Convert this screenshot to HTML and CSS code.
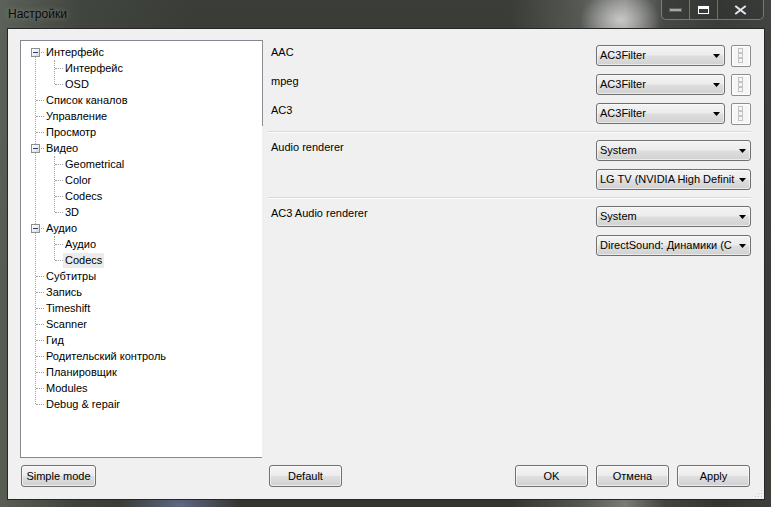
FILE: index.html
```html
<!DOCTYPE html>
<html lang="ru">
<head>
<meta charset="utf-8">
<title>Настройки</title>
<link rel="stylesheet" href="styles.css">
</head>
<body>
<div class="frame">
  <div class="titlebar">
    <span class="title">Настройки</span>
    <div class="caption">
      <span class="cap cap-min"><svg width="13" height="4" viewBox="0 0 13 4"><rect x="0.5" y="0.5" width="12" height="3" fill="#a3a8ab" stroke="#5d6166" stroke-width="1"/></svg></span>
      <span class="cap cap-max"><svg width="13" height="10" viewBox="0 0 13 10"><rect x="0.5" y="0.5" width="12" height="9" fill="none" stroke="#3a3d44" stroke-width="1"/><rect x="1.5" y="1.5" width="10" height="7" fill="none" stroke="#ffffff" stroke-width="1"/><rect x="2" y="2" width="9" height="2" fill="#ffffff"/><rect x="3.5" y="4.5" width="6" height="2" fill="#3a3d44"/></svg></span>
      <span class="cap cap-close"><svg width="13" height="10" viewBox="0 0 13 10"><path d="M2 1.5 L11 8.5 M11 1.5 L2 8.5" stroke="#3a3d44" stroke-width="3.6" stroke-linecap="square"/><path d="M2 1.5 L11 8.5 M11 1.5 L2 8.5" stroke="#e6e8ea" stroke-width="1.8" stroke-linecap="square"/></svg></span>
    </div>
  </div>
  <div class="client">
    <div class="main">
      <div class="tree">
        <div class="items">
          <div class="node top"><span class="box"></span><span class="lbl">Интерфейс</span></div>
          <div class="children">
            <div class="node child"><span class="lbl">Интерфейс</span></div>
            <div class="node child"><span class="lbl">OSD</span></div>
          </div>
          <div class="node top"><span class="lbl">Список каналов</span></div>
          <div class="node top"><span class="lbl">Управление</span></div>
          <div class="node top"><span class="lbl">Просмотр</span></div>
          <div class="node top"><span class="box"></span><span class="lbl">Видео</span></div>
          <div class="children">
            <div class="node child"><span class="lbl">Geometrical</span></div>
            <div class="node child"><span class="lbl">Color</span></div>
            <div class="node child"><span class="lbl">Codecs</span></div>
            <div class="node child"><span class="lbl">3D</span></div>
          </div>
          <div class="node top"><span class="box"></span><span class="lbl">Аудио</span></div>
          <div class="children">
            <div class="node child"><span class="lbl">Аудио</span></div>
            <div class="node child"><span class="lbl selected">Codecs</span></div>
          </div>
          <div class="node top"><span class="lbl">Субтитры</span></div>
          <div class="node top"><span class="lbl">Запись</span></div>
          <div class="node top"><span class="lbl">Timeshift</span></div>
          <div class="node top"><span class="lbl">Scanner</span></div>
          <div class="node top"><span class="lbl">Гид</span></div>
          <div class="node top"><span class="lbl">Родительский контроль</span></div>
          <div class="node top"><span class="lbl">Планировщик</span></div>
          <div class="node top"><span class="lbl">Modules</span></div>
          <div class="node top"><span class="lbl">Debug &amp; repair</span></div>
        </div>
      </div>
      <div class="panel">
        <div class="group">
          <div class="row">
            <span class="label">AAC</span>
            <div class="combo narrow"><span class="txt">AC3Filter</span><svg class="arrow" width="7" height="4" viewBox="0 0 7 4"><polygon points="0,0 7,0 3.5,4" fill="#000"/></svg></div>
            <span class="mini"><svg width="6" height="16" viewBox="0 0 6 16"><rect x="0.5" y="0.5" width="4" height="4" fill="none" stroke="#c4c4c4"/><rect x="0.5" y="5.5" width="4" height="4" fill="none" stroke="#c4c4c4"/><rect x="0.5" y="10.5" width="4" height="4" fill="none" stroke="#c4c4c4"/></svg></span>
          </div>
          <div class="row">
            <span class="label">mpeg</span>
            <div class="combo narrow"><span class="txt">AC3Filter</span><svg class="arrow" width="7" height="4" viewBox="0 0 7 4"><polygon points="0,0 7,0 3.5,4" fill="#000"/></svg></div>
            <span class="mini"><svg width="6" height="16" viewBox="0 0 6 16"><rect x="0.5" y="0.5" width="4" height="4" fill="none" stroke="#c4c4c4"/><rect x="0.5" y="5.5" width="4" height="4" fill="none" stroke="#c4c4c4"/><rect x="0.5" y="10.5" width="4" height="4" fill="none" stroke="#c4c4c4"/></svg></span>
          </div>
          <div class="row">
            <span class="label">AC3</span>
            <div class="combo narrow"><span class="txt">AC3Filter</span><svg class="arrow" width="7" height="4" viewBox="0 0 7 4"><polygon points="0,0 7,0 3.5,4" fill="#000"/></svg></div>
            <span class="mini"><svg width="6" height="16" viewBox="0 0 6 16"><rect x="0.5" y="0.5" width="4" height="4" fill="none" stroke="#c4c4c4"/><rect x="0.5" y="5.5" width="4" height="4" fill="none" stroke="#c4c4c4"/><rect x="0.5" y="10.5" width="4" height="4" fill="none" stroke="#c4c4c4"/></svg></span>
          </div>
        </div>
        <div class="sep"></div>
        <div class="group-row">
          <span class="label">Audio renderer</span>
          <div class="stack">
            <div class="combo wide"><span class="txt">System</span><svg class="arrow" width="7" height="4" viewBox="0 0 7 4"><polygon points="0,0 7,0 3.5,4" fill="#000"/></svg></div>
            <div class="combo wide"><span class="txt">LG TV (NVIDIA High Definit</span><svg class="arrow" width="7" height="4" viewBox="0 0 7 4"><polygon points="0,0 7,0 3.5,4" fill="#000"/></svg></div>
          </div>
        </div>
        <div class="sep"></div>
        <div class="group-row">
          <span class="label">AC3 Audio renderer</span>
          <div class="stack">
            <div class="combo wide"><span class="txt">System</span><svg class="arrow" width="7" height="4" viewBox="0 0 7 4"><polygon points="0,0 7,0 3.5,4" fill="#000"/></svg></div>
            <div class="combo wide"><span class="txt">DirectSound: Динамики (C</span><svg class="arrow" width="7" height="4" viewBox="0 0 7 4"><polygon points="0,0 7,0 3.5,4" fill="#000"/></svg></div>
          </div>
        </div>
      </div>
    </div>
    <div class="bottom">
      <div class="bottom-left"><button class="btn btn-simple">Simple mode</button></div>
      <div class="bottom-right">
        <button class="btn">Default</button>
        <span class="spacer"></span>
        <button class="btn">OK</button>
        <button class="btn">Отмена</button>
        <button class="btn">Apply</button>
      </div>
    </div>
    <svg class="grip" width="10" height="10" viewBox="0 0 10 10">
      <g fill="#c8c8c8"><rect x="8" y="2" width="1" height="1"/><rect x="5" y="5" width="1" height="1"/><rect x="8" y="5" width="1" height="1"/><rect x="2" y="8" width="1" height="1"/><rect x="5" y="8" width="1" height="1"/><rect x="8" y="8" width="1" height="1"/></g>
    </svg>
  </div>
</div>
</body>
</html>
```

FILE: styles.css
```css
html, body {
  margin: 0;
  padding: 0;
}

body {
  width: 771px;
  height: 507px;
  overflow: hidden;
  font-family: "Liberation Sans", Arial, sans-serif;
  font-size: 11px;
  color: #000;
}

.frame {
  box-sizing: border-box;
  width: 771px;
  height: 507px;
  padding: 0 6px 7px 7px;
  display: flex;
  flex-direction: column;
  background:
    radial-gradient(ellipse 60px 30px at 180px 505px, rgba(130,145,200,.55), rgba(130,145,200,0)),
    radial-gradient(ellipse 40px 30px at 620px 20px, rgba(225,225,225,.75), rgba(225,225,225,0)),
    linear-gradient(90deg, rgba(120,128,116,.55) 0, rgba(80,86,78,.35) 80px, rgba(0,0,0,0) 190px, rgba(0,0,0,0) 510px, rgba(120,124,118,.45) 580px, rgba(180,180,178,.55) 625px, rgba(100,100,100,.3) 665px, rgba(0,0,0,0) 720px, rgba(90,90,90,.25) 771px),
    linear-gradient(180deg, #3a3d38 0, #2e302c 60%, #34352f 100%);
}

.titlebar {
  height: 28px;
  margin: 0 -6px 0 -7px;
  display: flex;
  align-items: flex-start;
}

.title {
  line-height: 29px;
  padding-left: 8px;
  font-family: "Liberation Sans", Arial, sans-serif;
  font-size: 12px;
  color: #0a0a0a;
  text-shadow: 0 0 6px rgba(200,205,200,.5);
}

.caption {
  margin-left: auto;
  margin-right: 7px;
  display: flex;
  height: 19px;
  border: 1px solid rgba(255,255,255,.32);
  border-top: none;
  border-radius: 0 0 5px 5px;
  overflow: hidden;
  background: rgba(40,42,40,.35);
}

.cap {
  display: flex;
  align-items: center;
  justify-content: center;
  width: 27px;
  border-right: 1px solid rgba(255,255,255,.3);
}

.cap-close {
  width: 45px;
  border-right: none;
}

.client {
  flex: 1;
  position: relative;
  border: 1px solid #262626;
  background: #f0f0f0;
  display: flex;
  flex-direction: column;
  padding: 11px 0 12px 12px;
}

.main {
  display: flex;
  height: 418px;
}

.tree {
  box-sizing: border-box;
  width: 242px;
  height: 418px;
  border: 1px solid #828790;
  border-right: none;
  background: #fff;
  padding-top: 3px;
}

.items {
  position: relative;
}

.items::before {
  content: "";
  position: absolute;
  left: 14px;
  top: 8px;
  bottom: 8px;
  border-left: 1px dotted #a0a0a0;
}

.children {
  position: relative;
}

.children::before {
  content: "";
  position: absolute;
  left: 33px;
  top: 0;
  bottom: 8px;
  border-left: 1px dotted #a0a0a0;
}

.node {
  position: relative;
  height: 16px;
  display: flex;
  align-items: flex-start;
}

.node::before {
  content: "";
  position: absolute;
  top: 8px;
  width: 8px;
  border-top: 1px dotted #a0a0a0;
}

.node.top {
  padding-left: 23px;
}

.node.top::before {
  left: 15px;
}

.node.child {
  padding-left: 42px;
}

.node.child::before {
  left: 34px;
}

.box {
  position: absolute;
  left: 10px;
  top: 4px;
  width: 9px;
  height: 9px;
  box-sizing: border-box;
  border: 1px solid #8e8f8f;
  background: linear-gradient(135deg, #ffffff 0, #f0f0f0 50%, #d6d6d6 100%);
  z-index: 1;
}

.box::after {
  content: "";
  position: absolute;
  left: 1px;
  top: 3px;
  width: 5px;
  height: 1px;
  background: #1e3f7c;
}

.lbl {
  margin-top: 1px;
  padding: 0 2px;
  line-height: 14px;
  height: 15px;
  white-space: nowrap;
}

.lbl.selected {
  background: #ebebeb;
}

.panel {
  flex: 1;
  padding: 5px 13px 0 9px;
  background: linear-gradient(#8a8e95, #8a8e95) no-repeat 0 0 / 1px 86px;
}

.group {
  display: flex;
  flex-direction: column;
  gap: 8px;
}

.row {
  display: flex;
  align-items: flex-start;
  height: 21px;
}

.label {
  flex: 1;
  padding-top: 1px;
  line-height: 13px;
  white-space: nowrap;
}

.combo {
  box-sizing: border-box;
  height: 21px;
  display: flex;
  align-items: center;
  padding: 0 4px 0 3px;
  border: 1px solid #707070;
  border-radius: 3px;
  background: linear-gradient(180deg, #f3f3f3 0, #ececec 48%, #dedede 52%, #d1d1d1 100%);
  box-shadow: inset 0 0 0 1px rgba(255,255,255,.55);
}

.combo.narrow {
  width: 129px;
}

.combo.wide {
  width: 155px;
}

.txt {
  flex: 1;
  white-space: nowrap;
  line-height: 13px;
}

.arrow {
  flex: none;
  margin-left: 2px;
}

.mini {
  box-sizing: border-box;
  width: 20px;
  height: 22px;
  margin-left: 6px;
  border: 1px solid #8d8d8d;
  border-radius: 2px;
  background: #f6f6f6;
  box-shadow: inset 0 0 0 1px #fff;
  display: flex;
  align-items: center;
  justify-content: center;
}

.sep {
  margin: 7px 0 7px -3px;
  height: 1px;
  background: #d9d9d9;
  border-bottom: 1px solid #fcfcfc;
  box-sizing: content-box;
}

.sep + .group-row {
  margin-top: 0;
}

.group-row {
  display: flex;
  align-items: flex-start;
}

.stack {
  display: flex;
  flex-direction: column;
  gap: 8px;
}

.bottom {
  display: flex;
  margin-top: 7px;
  height: 22px;
}

.bottom-left {
  width: 242px;
}

.bottom-right {
  flex: 1;
  display: flex;
  gap: 8px;
  padding: 0 14px 0 7px;
}

.spacer {
  flex: 1;
}

.btn {
  box-sizing: border-box;
  width: 73px;
  height: 22px;
  margin: 0;
  padding: 0;
  font-family: "Liberation Sans", Arial, sans-serif;
  font-size: 11px;
  color: #000;
  border: 1px solid #707070;
  border-radius: 3px;
  background: linear-gradient(180deg, #f3f3f3 0, #ececec 48%, #dedede 52%, #d1d1d1 100%);
  box-shadow: inset 0 0 0 1px rgba(255,255,255,.6);
}

.btn-simple {
  width: 75px;
  margin-left: 1px;
}

.grip {
  position: absolute;
  right: 1px;
  bottom: 1px;
}
```
